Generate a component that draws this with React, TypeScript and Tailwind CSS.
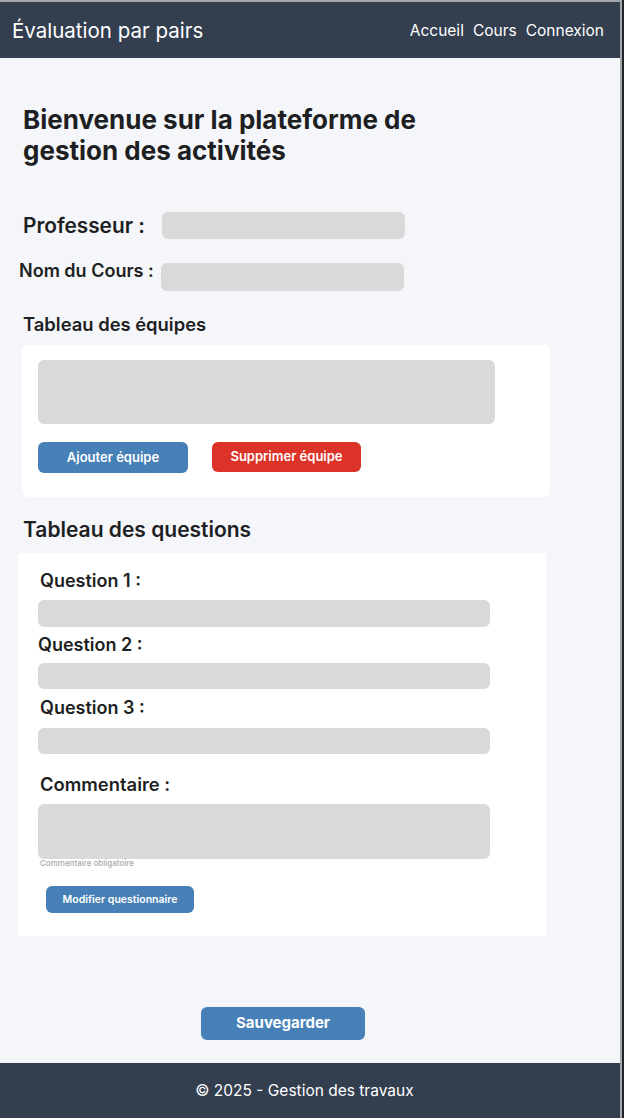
export default function App() {
  return (
    <div className="w-[624px] h-[1118px] bg-[#1f2328] pr-[2px] font-['Inter','Liberation_Sans',sans-serif]">
      <div className="flex h-full flex-col border-t-2 border-r-2 border-[#a3a6ab] bg-[#f5f6fa]">
        {/* Header */}
        <header className="flex h-[56px] items-center justify-between bg-[#333e4f] pl-[12px] pr-[16px] pt-[2px] text-white">
          <h1 className="text-[20.5px] font-normal">Évaluation par pairs</h1>
          <nav className="flex gap-[9px] text-[15.5px] font-normal">
            <span>Accueil</span>
            <span>Cours</span>
            <span>Connexion</span>
          </nav>
        </header>

        <main className="flex-1 px-[18px] text-[#1e1f22]">
          <h2 className="ml-[5px] mt-[46px] text-[26px] font-bold leading-[31px]">
            Bienvenue sur la plateforme de
            <br />
            gestion des activités
          </h2>

          <div className="mt-[44px] flex items-center">
            <span className="ml-[5px] w-[139px] text-[20.8px] font-semibold">Professeur :</span>
            <div className="h-[27px] w-[243px] rounded-md bg-[#d9d9d9]"></div>
          </div>
          <div className="mt-[22px] flex items-start">
            <span className="ml-[1px] -mt-[4px] w-[142px] text-[18px] font-semibold leading-[24px]">Nom du Cours :</span>
            <div className="h-[28px] w-[243px] rounded-md bg-[#d9d9d9]"></div>
          </div>

          <h3 className="ml-[5px] mt-[21px] text-[18.4px] font-semibold leading-[24px]">Tableau des équipes</h3>
          <div className="ml-[4px] mt-[9px] w-[528px] rounded-md bg-white px-[16px] pb-[24px] pt-[15px]">
            <div className="h-[64px] w-[457px] rounded-md bg-[#d9d9d9]"></div>
            <div className="mt-[18px] flex gap-[24px]">
              <button className="h-[31px] w-[150px] rounded-md bg-[#4680b6] text-[13px] font-semibold text-white">
                Ajouter équipe
              </button>
              <button className="h-[30px] w-[149px] rounded-md bg-[#dc3328] text-[13px] font-semibold text-white">
                Supprimer équipe
              </button>
            </div>
          </div>

          <h3 className="ml-[5px] mt-[19px] text-[21px] font-semibold leading-[28px]">Tableau des questions</h3>
          <div className="mt-[9px] w-[528px] bg-white px-[20px] pb-[23px] pt-[16px]">
            <div className="ml-[2px] text-[18px] font-semibold leading-[24px]">Question 1 :</div>
            <div className="mt-[7px] h-[27px] w-[452px] rounded-md bg-[#d9d9d9]"></div>
            <div className="mt-[6px] text-[18px] font-semibold leading-[24px]">Question 2 :</div>
            <div className="mt-[6px] h-[26px] w-[452px] rounded-md bg-[#d9d9d9]"></div>
            <div className="ml-[2px] mt-[7px] text-[18px] font-semibold leading-[24px]">Question 3 :</div>
            <div className="mt-[8px] h-[26px] w-[452px] rounded-md bg-[#d9d9d9]"></div>
            <div className="ml-[2px] mt-[17px] text-[18.4px] font-semibold leading-[26px]">Commentaire :</div>
            <div className="mt-[7px] h-[55px] w-[452px] rounded-md bg-[#d9d9d9]"></div>
            <div className="ml-[2px] text-[8px] font-medium leading-[9px] text-[#a8a8a8]">Commentaire obligatoire</div>
            <button className="ml-[8px] mt-[18px] h-[27px] w-[148px] rounded-md bg-[#4680b6] text-[10.5px] font-semibold text-white">
              Modifier questionnaire
            </button>
          </div>

          <div className="mt-[71px] flex">
            <button className="ml-[183px] h-[33px] w-[164px] rounded-md bg-[#4680b6] text-[15px] font-bold text-white">
              Sauvegarder
            </button>
          </div>
        </main>

        <footer className="flex h-[55px] items-center justify-center bg-[#333e4f] pr-[11px] text-[15.5px] text-white">
          © 2025 - Gestion des travaux
        </footer>
      </div>
    </div>
  );
}
